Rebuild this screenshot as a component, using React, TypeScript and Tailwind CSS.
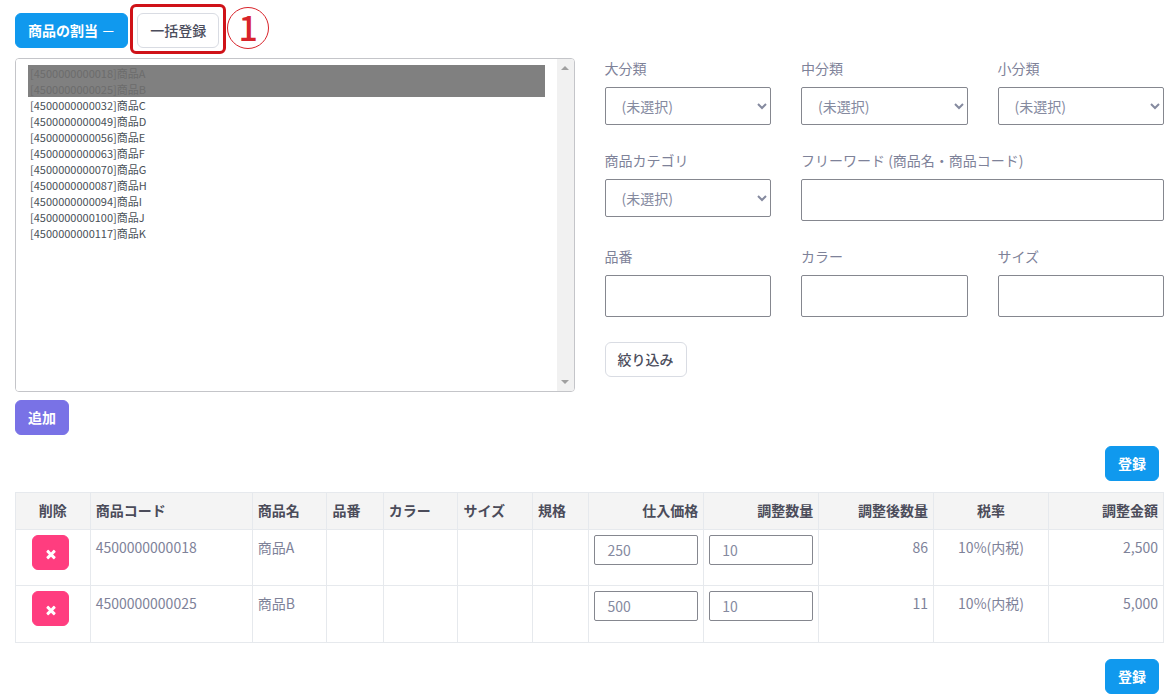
import type { ButtonHTMLAttributes, ReactNode } from "react";

const options = [
  { code: "4500000000018", name: "商品A", assigned: true },
  { code: "4500000000025", name: "商品B", assigned: true },
  { code: "4500000000032", name: "商品C" },
  { code: "4500000000049", name: "商品D" },
  { code: "4500000000056", name: "商品E" },
  { code: "4500000000063", name: "商品F" },
  { code: "4500000000070", name: "商品G" },
  { code: "4500000000087", name: "商品H" },
  { code: "4500000000094", name: "商品I" },
  { code: "4500000000100", name: "商品J" },
  { code: "4500000000117", name: "商品K" },
];

const rows = [
  { code: "4500000000018", name: "商品A", price: "250", qty: "10", after: "86", tax: "10%(内税)", total: "2,500" },
  { code: "4500000000025", name: "商品B", price: "500", qty: "10", after: "11", tax: "10%(内税)", total: "5,000" },
];

const columns = [
  { label: "削除", style: "w-[6.5%] text-center" },
  { label: "商品コード", style: "w-[14.1%] text-left" },
  { label: "商品名", style: "w-[6.5%] text-left" },
  { label: "品番", style: "w-[4.9%] text-left" },
  { label: "カラー", style: "w-[6.5%] text-left" },
  { label: "サイズ", style: "w-[6.5%] text-left" },
  { label: "規格", style: "w-[4.9%] text-left" },
  { label: "仕入価格", style: "w-[10%] text-right" },
  { label: "調整数量", style: "w-[10%] text-right" },
  { label: "調整後数量", style: "w-[10%] text-right" },
  { label: "税率", style: "w-[10%] text-center" },
  { label: "調整金額", style: "w-[10%] text-right" },
];

const variants = {
  primary: "border-[#1099ee] bg-[#1099ee] font-bold text-white",
  add: "border-[#7972e6] bg-[#7972e6] font-bold text-white",
  plain: "border-[#d9dce3] bg-white font-medium text-[#4b4d5c]",
  danger: "border-[#ff3d7f] bg-[#ff3d7f] text-white",
};

function Button({
  variant,
  children,
  ...rest
}: { variant: keyof typeof variants; children: ReactNode } & ButtonHTMLAttributes<HTMLButtonElement>) {
  return (
    <button
      type="button"
      {...rest}
      className={`inline-flex h-[35px] items-center justify-center rounded-md border px-3 pb-[2px] text-sm whitespace-nowrap ${variants[variant]}`}
    >
      {children}
    </button>
  );
}

const control = "block w-full rounded-xs border border-[#85878f] bg-white text-sm text-[#858a9f]";

function Field({ id, label, wide, children }: { id: string; label: string; wide?: boolean; children: ReactNode }) {
  return (
    <div className={wide ? "col-span-2" : ""}>
      <label htmlFor={id} className="mb-2 block leading-[21px]">
        {label}
      </label>
      {children}
    </div>
  );
}

function SelectField({ id, label }: { id: string; label: string }) {
  return (
    <Field id={id} label={label}>
      <select id={id} className={`${control} h-[38px] px-3`}>
        <option>(未選択)</option>
      </select>
    </Field>
  );
}

function TextField({ id, label, wide }: { id: string; label: string; wide?: boolean }) {
  return (
    <Field id={id} label={label} wide={wide}>
      <input id={id} type="text" className={`${control} h-[42px] px-3`} />
    </Field>
  );
}

function CrossIcon() {
  return (
    <svg viewBox="0 0 1792 1792" className="size-[14px] shrink-0 fill-current" aria-hidden="true">
      <path d="M1490 1322q0 40-28 68l-136 136q-28 28-68 28t-68-28l-294-294-294 294q-28 28-68 28t-68-28l-136-136q-28-28-28-68t28-68l294-294-294-294q-28-28-28-68t28-68l136-136q28-28 68-28t68 28l294 294 294-294q28-28 68-28t68 28l136 136q28 28 28 68t-28 68l-294 294 294 294q28 28 28 68z" />
    </svg>
  );
}

function ScrollTrack() {
  return (
    <div className="flex w-[17px] flex-col items-center justify-between bg-[#f1f1f1] py-[7px]" aria-hidden="true">
      <svg viewBox="0 0 8 4" className="h-1 w-2 fill-[#a0a0a0]">
        <path d="M0 4 4 0l4 4z" />
      </svg>
      <svg viewBox="0 0 8 4" className="h-1 w-2 fill-[#a0a0a0]">
        <path d="M0 0h8L4 4z" />
      </svg>
    </div>
  );
}

const cell = "border border-[#e6e9ed] p-[5px]";

export default function App() {
  return (
    <main
      lang="ja"
      className="bg-white pt-[13px] pr-[11px] pb-[6px] pl-[15px] font-['Noto_Sans_CJK_JP',sans-serif] text-sm text-[#7e8299]"
    >
      <header className="flex gap-[9px]">
        <Button variant="primary">
          <span>
            商品の割当 <span className="font-normal">－</span>
          </span>
        </Button>
        <div className="relative">
          <Button variant="plain">一括登録</Button>
          <span className="pointer-events-none absolute -inset-x-[7px] -top-[9px] -bottom-[6px] rounded-md border-[3px] border-[#cf1218]" />
          <span className="absolute -top-[6px] left-full ml-2 flex size-[42px] items-center justify-center rounded-full border border-[#d8232a] pb-[2px] text-[34px] leading-none font-medium text-[#d8232a]">
            1
          </span>
        </div>
      </header>

      <section className="mt-[10px] grid grid-cols-2 gap-[30px]">
        <div className="flex h-[334px] overflow-hidden rounded-sm border border-[#c4c5c9]">
          <select
            multiple
            aria-label="商品"
            className="min-w-0 flex-1 appearance-none overflow-hidden bg-white px-3 py-[6px] text-[11px] text-[#495057]"
          >
            {options.map((o) => (
              <option
                key={o.code}
                disabled={o.assigned}
                className={`h-4 min-h-0 px-[2px] py-0 leading-[14px] ${o.assigned ? "bg-[#808080] text-[#6c6c6c]" : "text-[#495057]"}`}
              >
                {`[${o.code}]${o.name}`}
              </option>
            ))}
          </select>
          <ScrollTrack />
        </div>

        <form className="grid grid-cols-3 content-start gap-x-[30px] gap-y-[25px]">
          <SelectField id="large" label="大分類" />
          <SelectField id="middle" label="中分類" />
          <SelectField id="small" label="小分類" />
          <SelectField id="category" label="商品カテゴリ" />
          <TextField id="keyword" label="フリーワード (商品名・商品コード)" wide />
          <TextField id="number" label="品番" />
          <TextField id="color" label="カラー" />
          <TextField id="size" label="サイズ" />
          <div className="col-span-3 flex">
            <Button variant="plain">絞り込み</Button>
          </div>
        </form>
      </section>

      <div className="mt-2 flex">
        <Button variant="add">追加</Button>
      </div>

      <div className="mt-[11px] flex justify-end pr-[5px]">
        <Button variant="primary">登録</Button>
      </div>

      <table className="mt-[11px] w-full table-fixed border-collapse">
        <thead className="bg-[#f4f4f4] text-[#4b4c5a]">
          <tr>
            {columns.map((c) => (
              <th key={c.label} className={`border border-[#e6e9ed] px-[5px] pt-[7px] pb-2 leading-[21px] font-bold ${c.style}`}>
                {c.label}
              </th>
            ))}
          </tr>
        </thead>
        <tbody className="align-top leading-[24px]">
          {rows.map((r) => (
            <tr key={r.code} className="h-14 last:h-[57px]">
              <td className={cell}>
                <div className="flex justify-center pr-1">
                  <Button variant="danger" aria-label={`${r.name}を削除`}>
                    <span className="flex w-[11px] justify-center pt-1">
                      <CrossIcon />
                    </span>
                  </Button>
                </div>
              </td>
              <td className={cell}>{r.code}</td>
              <td className={cell}>{r.name}</td>
              <td className={cell} />
              <td className={cell} />
              <td className={cell} />
              <td className={cell} />
              <td className={cell}>
                <input aria-label={`${r.name}の仕入価格`} type="text" defaultValue={r.price} className={`${control} h-[30px] px-3`} />
              </td>
              <td className={cell}>
                <input aria-label={`${r.name}の調整数量`} type="text" defaultValue={r.qty} className={`${control} h-[30px] px-3`} />
              </td>
              <td className={`${cell} text-right`}>{r.after}</td>
              <td className={`${cell} text-center`}>{r.tax}</td>
              <td className={`${cell} text-right`}>{r.total}</td>
            </tr>
          ))}
        </tbody>
      </table>

      <div className="mt-4 flex justify-end pr-[5px]">
        <Button variant="primary">登録</Button>
      </div>
    </main>
  );
}
